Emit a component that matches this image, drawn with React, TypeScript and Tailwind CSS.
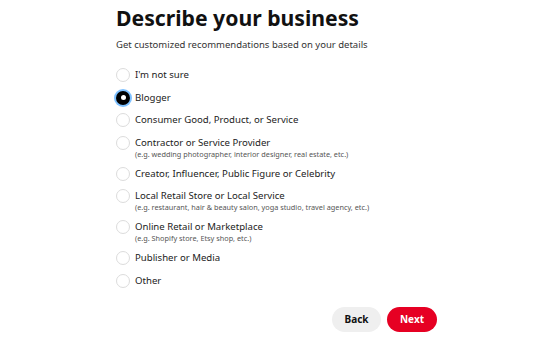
import { useState } from 'react'

const options = [
  { id: 'unsure', label: "I'm not sure" },
  { id: 'blogger', label: 'Blogger' },
  { id: 'consumer', label: 'Consumer Good, Product, or Service' },
  {
    id: 'contractor',
    label: 'Contractor or Service Provider',
    hint: '(e.g. wedding photographer, interior designer, real estate, etc.)',
  },
  { id: 'creator', label: 'Creator, Influencer, Public Figure or Celebrity' },
  {
    id: 'local',
    label: 'Local Retail Store or Local Service',
    hint: '(e.g. restaurant, hair & beauty salon, yoga studio, travel agency, etc.)',
  },
  {
    id: 'online',
    label: 'Online Retail or Marketplace',
    hint: '(e.g. Shopify store, Etsy shop, etc.)',
  },
  { id: 'publisher', label: 'Publisher or Media' },
  { id: 'other', label: 'Other' },
]

export default function App() {
  const [value, setValue] = useState('blogger')

  return (
    <div className="h-[340px] w-[550px] overflow-hidden bg-white text-[#111] [font-family:'Noto_Sans',sans-serif]">
      <div className="ml-[116px] w-[321px] pt-[3px]">
        <h1 className="text-[21.2px] font-bold leading-[29px]">Describe your business</h1>
        <p className="mt-[6px] text-[9.5px] leading-[14px] text-[#333]">
          Get customized recommendations based on your details
        </p>

        <div className="mt-[15px] flex flex-col">
          {options.map((o) => {
            const checked = value === o.id
            return (
              <label
                key={o.id}
                onClick={() => setValue(o.id)}
                className={`flex cursor-pointer gap-[5px] ${o.hint ? 'h-[31px]' : 'h-[22.5px]'}`}
              >
                <span
                  className={`mt-[1px] h-[14px] w-[14px] shrink-0 rounded-full ${
                    checked
                      ? 'flex items-center justify-center bg-black ring-2 ring-[#7fc1ff]'
                      : 'border-[1.5px] border-[#dcdcdc]'
                  }`}
                >
                  {checked && <span className="h-[5px] w-[5px] rounded-full bg-white" />}
                </span>
                <span className="flex flex-col">
                  <span className="text-[9.6px] leading-[16px] text-[#222]">{o.label}</span>
                  {o.hint && (
                    <span className="-mt-[2px] text-[7.3px] leading-[10px] text-[#555]">{o.hint}</span>
                  )}
                </span>
              </label>
            )
          })}
        </div>

        <div className="mt-[12px] flex justify-end gap-[6px]">
          <button
            type="button"
            className="h-[25px] w-[49px] rounded-full bg-[#efefef] text-[10px] font-bold text-[#111]"
          >
            Back
          </button>
          <button
            type="button"
            className="h-[25px] w-[50px] rounded-full bg-[#e60023] text-[10px] font-bold text-white"
          >
            Next
          </button>
        </div>
      </div>
    </div>
  )
}
